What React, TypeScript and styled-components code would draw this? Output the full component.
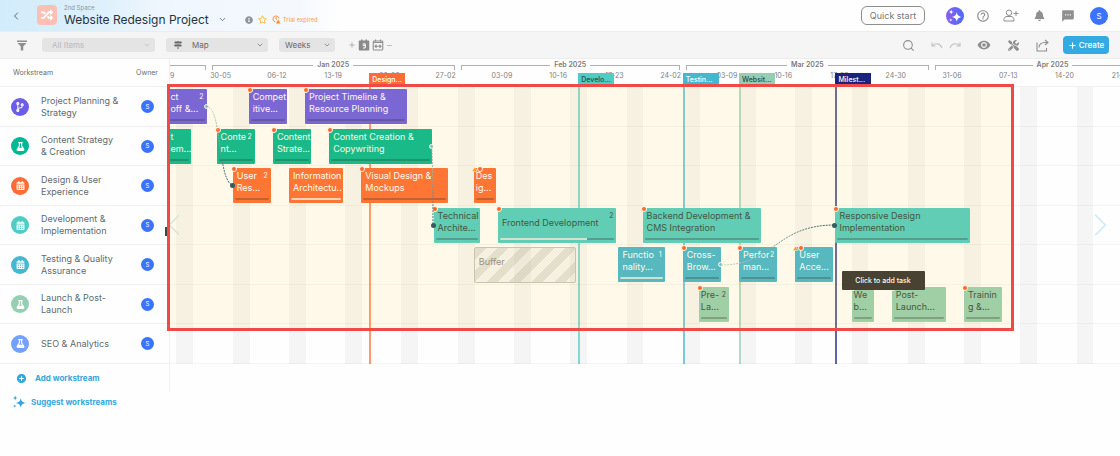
import React from 'react';
import styled, { createGlobalStyle, css } from 'styled-components';
import { FaRandom, FaInfoCircle, FaRegStar, FaMapSigns, FaTools, FaCodeBranch, FaFlask, FaCalendarAlt, FaBell } from 'react-icons/fa';
import { MdHelpOutline, MdTextsms, MdRemoveRedEye, MdAddCircle } from 'react-icons/md';
import { Search, ChevronDown, ChevronLeft, ChevronRight, Plus, Minus } from 'lucide-react';

const GlobalStyle = createGlobalStyle`
  *, *::before, *::after { box-sizing: border-box; }
  body { margin: 0; background: #fefefe; font-family: Inter, "Liberation Sans", sans-serif; color: #5b6670; }
  button, select { font-family: inherit; margin: 0; }
  h1, ul { margin: 0; padding: 0; font-weight: 400; list-style: none; }
  svg { display: block; flex: none; }
`;

/* ---------- timeline scale ---------- */
const VISIBLE_DAYS = 118.2;
const LEAD = -0.2;
const dayPct = (d: number) => `${((d + LEAD) / VISIBLE_DAYS) * 100}%`;
const spanPct = (n: number) => `${(n / VISIBLE_DAYS) * 100}%`;

const palette = {
  purple: '#6c5ce7',
  green: '#00b894',
  orange: '#ff6b35',
  teal: '#4ecdc4',
  blue: '#45b7d1',
  sage: '#96ceb4',
  sky: '#74a0ff',
};

/* ---------- header ---------- */
const TopBar = styled.header`
  display: flex;
  align-items: center;
  height: 31px;
  padding: 0 12px 0 8px;
  background: linear-gradient(90deg, #d2ecfb 0, #ddf0fb 100px, #eff6fd 160px, #f5f9fe 300px, #fefefe 340px);
`;

const PlainButton = styled.button<{ $w?: number; $tone?: string }>`
  display: flex;
  align-items: center;
  justify-content: center;
  flex: none;
  width: ${p => p.$w ?? 16}px;
  height: 18px;
  padding: 0;
  border: 0;
  background: none;
  color: ${p => p.$tone ?? '#8f8f8f'};
  cursor: pointer;
`;

const SpaceLogo = styled.div`
  display: grid;
  place-items: center;
  width: 20px;
  height: 20px;
  margin: 0 7px 2px 14px;
  border-radius: 4px;
  background: #fbc0b5;
  color: #fff;
`;

const TitleBlock = styled.div`
  display: flex;
  flex-direction: column;
`;

const SpaceName = styled.span`
  font-size: 6px;
  line-height: 6px;
  padding-top: 2px;
  color: #8b959b;
`;

const TitleRow = styled.div`
  display: flex;
  align-items: center;
  gap: 6px;
`;

const Title = styled.h1`
  font-size: 12px;
  line-height: 16px;
  color: #24343c;
  white-space: nowrap;
`;

const StatusIcons = styled.div`
  display: flex;
  align-items: center;
  gap: 5px;
  margin: 8px 0 0 14px;
  font-size: 6px;
  color: #ff9a4a;
  white-space: nowrap;
`;

const Trial = styled.span`
  display: flex;
  align-items: center;
  gap: 2px;
`;

const Spacer = styled.div`
  flex: 1;
`;

const HeaderActions = styled.nav`
  display: flex;
  align-items: center;
  gap: 10px;
`;

const Account = styled.div`
  padding-left: 2px;
`;

const QuickStart = styled.button`
  width: 64px;
  height: 19px;
  margin-right: 11px;
  padding: 0;
  border: 1px solid #8d8d8d;
  border-radius: 6px;
  background: #fff;
  font-size: 9px;
  color: #777;
  white-space: nowrap;
`;

const AiButton = styled.button`
  display: grid;
  place-items: center;
  width: 18px;
  height: 18px;
  padding: 0;
  border: 0;
  border-radius: 50%;
  background: linear-gradient(90deg, #8b5cf0, #4b6cf8);
  color: #fff;
`;

const Avatar = styled.span<{ $size: number }>`
  display: grid;
  place-items: center;
  flex: none;
  width: ${p => p.$size}px;
  height: ${p => p.$size}px;
  border-radius: 50%;
  background: #3b73ff;
  color: #fff;
  font-size: ${p => (p.$size > 15 ? 8 : 6)}px;
  line-height: 8px;
`;

/* ---------- toolbar ---------- */
const Toolbar = styled.div`
  display: flex;
  align-items: center;
  height: 28px;
  padding: 0 11px 0 14px;
  border-top: 1px solid #ececec;
  border-bottom: 1px solid #ececec;
  background: #f5f5f5;
`;

const Filters = styled.div`
  display: flex;
  gap: 11px;
  padding: 0 13px 0 12px;
`;

const SelectShell = styled.label<{ $w: number; $indent: number; $muted?: boolean }>`
  display: flex;
  align-items: center;
  gap: 10px;
  width: ${p => p.$w}px;
  height: 14px;
  padding: 0 4px 0 ${p => p.$indent}px;
  border-radius: 3px;
  background: #e4e4e4;
  color: ${p => (p.$muted ? '#b9b9b9' : '#686868')};

  select {
    flex: 1;
    min-width: 0;
    padding: 0;
    border: 0;
    appearance: none;
    background: transparent;
    color: inherit;
    font-size: 8px;
    line-height: 12px;
    opacity: 1;
  }
`;

const SelectArrow = styled(ChevronDown)`
  margin-left: -10px;
`;

const ZoomTools = styled.div`
  display: flex;
  align-items: center;
  gap: 2px;
  color: #9a9a9a;
`;

const ToolActions = styled.div`
  display: flex;
  align-items: center;
  gap: 13px;
`;

const UndoGroup = styled.div`
  display: flex;
  gap: 2px;
`;

const CreateButton = styled.button`
  display: flex;
  align-items: center;
  justify-content: center;
  gap: 2px;
  width: 46px;
  height: 18px;
  padding: 0;
  border: 0;
  border-radius: 4px;
  background: #33aae1;
  color: #fff;
  font-size: 8px;
  font-weight: 500;
`;

/* ---------- board ---------- */
const Board = styled.main`
  display: flex;
  align-items: flex-start;
`;

const Sidebar = styled.aside`
  flex: none;
  width: 170px;
  border-right: 1px solid #efefef;
`;

const SideHead = styled.div`
  display: flex;
  justify-content: space-between;
  align-items: center;
  height: 28px;
  padding: 0 11px 0 13px;
  border-bottom: 1px solid #f0f0f0;
  font-size: 7px;
  color: #6d6d6d;
`;

const rowHeight = css`
  height: 40px;
  &:nth-child(even) { height: 39px; }
`;

const StreamRow = styled.li`
  ${rowHeight}
  display: flex;
  align-items: center;
  padding: 0 15px 0 11px;
  border-bottom: 1px solid #efefef;
`;

const StreamIcon = styled.span<{ $tone: string }>`
  display: grid;
  place-items: center;
  width: 18px;
  height: 18px;
  margin-right: 12px;
  border-radius: 50%;
  background: ${p => p.$tone};
  color: #fff;
`;

const StreamName = styled.span`
  flex: 1;
  padding-right: 20px;
  font-size: 9px;
  line-height: 12px;
  color: #5f6b6f;
`;

const SideAction = styled.button<{ $pad: number; $gap: number; $h: number }>`
  display: flex;
  align-items: center;
  gap: ${p => p.$gap}px;
  width: 100%;
  height: ${p => p.$h}px;
  padding: 0 0 0 ${p => p.$pad}px;
  border: 0;
  background: none;
  color: #36a7dc;
  font-size: 8px;
  font-weight: 700;
  white-space: nowrap;
`;

const Footer = styled.div`
  width: 170px;
`;

const Timeline = styled.section`
  position: relative;
  flex: 1;
  min-width: 0;
`;

const Clip = styled.div`
  position: relative;
  overflow: hidden;
`;

const ScaleHead = styled.div`
  position: relative;
  display: grid;
  grid-template-rows: 12px 16px;
  height: 28px;
  border-bottom: 1px solid #f0f0f0;
`;

const Months = styled.div`
  display: grid;
`;

const Month = styled.div`
  grid-area: 1 / 1;
  display: flex;
  align-items: center;
  padding: 0 3px;
  font-size: 7px;
  line-height: 10px;
  font-weight: 600;
  color: #7b7b7b;
  white-space: nowrap;
`;

const Bracket = styled.i<{ $side: 'left' | 'right' }>`
  flex: 1;
  height: 5px;
  margin-top: 4px;
  border-top: 1px solid #b0b0b0;
  border-${p => p.$side}: 1px solid #b0b0b0;
  margin-${p => (p.$side === 'left' ? 'right' : 'left')}: 4px;
`;

const Weeks = styled.div`
  display: grid;
`;

const Week = styled.span`
  grid-area: 1 / 1;
  text-align: center;
  font-size: 7px;
  line-height: 10px;
  color: #808080;
  white-space: nowrap;
`;

const Lanes = styled.div`
  position: relative;
`;

const Backdrop = styled.div`
  position: absolute;
  inset: 0;
  display: grid;
`;

const Weekend = styled.i`
  grid-area: 1 / 1;
  background: #f5f5f5;
`;

const MarkerLine = styled.i<{ $tone: string }>`
  grid-area: 1 / 1;
  width: 2px;
  background: ${p => p.$tone};
  opacity: 0.7;
`;

const LaneList = styled.div`
  position: relative;
`;

const Lane = styled.div`
  ${rowHeight}
  position: relative;
  display: grid;
  align-items: start;
  padding-top: 2px;
  border-bottom: 1px solid rgba(0, 0, 0, 0.04);
`;

const Task = styled.div<{ $tone: string; $dark?: boolean; $narrow?: boolean; $single?: boolean }>`
  grid-area: 1 / 1;
  position: relative;
  display: flex;
  align-items: ${p => (p.$single ? 'center' : 'flex-start')};
  height: 35px;
  padding: ${p => (p.$single ? '0 1px 6px 4px' : '2px 1px 0 4px')};
  ${p => p.$narrow && 'padding-left: 2px;'}
  border-radius: 1px;
  background: ${p => p.$tone};
  color: ${p => (p.$dark ? '#334b43' : '#fff')};
  font-size: 9px;
  line-height: 12px;
`;

const TaskLabel = styled.span`
  flex: 1;
  min-width: 0;
  white-space: pre;
`;

const TaskCount = styled.span`
  position: absolute;
  top: 3px;
  right: 3px;
  font-size: 7px;
  line-height: 9px;
`;

const Progress = styled.i`
  position: absolute;
  left: 2px;
  right: 2px;
  bottom: 3px;
  height: 2px;
  border-radius: 1px;
  background: rgba(30, 40, 40, 0.3);
  overflow: hidden;

  &::after {
    content: '';
    display: block;
    width: var(--done);
    height: 100%;
    background: rgba(255, 255, 255, 0.75);
  }
`;

const Flags = styled.span`
  position: absolute;
  top: -2px;
  left: -2px;
  display: flex;
`;

const FlagDot = styled.i`
  width: 6px;
  height: 6px;
  border: 1px solid #fff;
  border-radius: 50%;
  background: #ff5a2c;
`;

const Pin = styled.i<{ $kind: 'out' | 'in' }>`
  position: absolute;
  top: 15px;
  ${p => (p.$kind === 'out' ? 'right: -2px;' : 'left: -3px;')}
  width: 5px;
  height: 5px;
  border-radius: 50%;
  border: ${p => (p.$kind === 'out' ? '1px solid #fff' : '0')};
  background: ${p => (p.$kind === 'out' ? '#6fc0d8' : '#1d5068')};
`;

const Buffer = styled.div`
  grid-area: 1 / 1;
  display: flex;
  align-items: center;
  height: 36px;
  padding: 0 4px 6px;
  border: 1px solid #c4c3bd;
  border-radius: 2px;
  background: repeating-linear-gradient(135deg, rgba(150, 150, 140, 0.28) 0 8px, rgba(190, 190, 190, 0.15) 8px 16px);
  font-size: 9px;
  line-height: 12px;
  color: #8d8a8c;
`;

const TagLayer = styled.div`
  position: absolute;
  inset: 14px 0 0;
  display: grid;
  align-items: start;
`;

const MarkerTag = styled.span<{ $tone: string; $dark?: boolean }>`
  grid-area: 1 / 1;
  width: 36px;
  height: 12px;
  padding-left: 3px;
  background: ${p => p.$tone};
  color: ${p => (p.$dark ? '#33474a' : '#fff')};
  font-size: 7px;
  font-weight: 500;
  line-height: 13px;
`;

const Links = styled.svg`
  position: absolute;
  inset: 0;
  width: 100%;
  height: 100%;
  pointer-events: none;
`;

const Tooltip = styled.div`
  position: absolute;
  top: 212px;
  width: 83px;
  height: 19px;
  border-radius: 1px;
  background: #333333;
  color: #fff;
  font-size: 7px;
  font-weight: 500;
  line-height: 19px;
  text-align: center;
`;

const Highlight = styled.div`
  position: absolute;
  top: 25px;
  left: -3px;
  bottom: 33px;
  width: calc(89% + 1px);
  border: 3px solid #f04a48;
  background: rgba(255, 205, 35, 0.1);
  pointer-events: none;
`;

const PageArrow = styled.button<{ $side: 'left' | 'right' }>`
  position: absolute;
  top: 153px;
  ${p => p.$side}: ${p => (p.$side === 'left' ? '-4px' : '13px')};
  padding: 0;
  border: 0;
  background: none;
  color: ${p => (p.$side === 'left' ? '#d6e9ee' : '#cdeafa')};
`;

const ResizeGrip = styled.i`
  position: absolute;
  top: 168px;
  left: -5px;
  width: 2px;
  height: 9px;
  background: #444;
`;

/* ---------- drawings ---------- */
const Sparkles = ({ size = 12 }: { size?: number }) => (
  <svg width={size} height={size} viewBox="0 0 24 24" fill="currentColor">
    <path d="M15 5c1 5.500 2.500 7 8.500 8.500C17.500 15 16 16.500 15 22c-1-5.500-2.500-7-8.500-8.500C12.500 12 14 10.500 15 5z" />
    <path d="M5.500 1c.5 2.800 1.300 3.600 4.200 4.300C6.800 6 6 6.800 5.500 9.600 5 6.800 4.200 6 1.300 5.300 4.200 4.600 5 3.800 5.500 1z" />
    <path d="M4.800 16c.4 2 1 2.600 3 3-2 .4-2.600 1-3 3-.4-2-1-2.600-3-3 2-.4 2.600-1 3-3z" />
  </svg>
);

const Funnel = () => (
  <svg width="12" height="11" viewBox="0 0 24 22" fill="#8f8f8f">
    <path d="M2 1h20v3H2zM3 6h18l-6.500 7v8h-5v-8z" />
  </svg>
);

const PersonAdd = () => (
  <svg width="16" height="13" viewBox="0 0 32 26" fill="none" stroke="currentColor" strokeWidth="2">
    <circle cx="12" cy="7.500" r="5.500" />
    <path d="M2 24v-3c0-4 3-6 6-6h8c3 0 6 2 6 6v3zM21 9h10M26 4v10" />
  </svg>
);

const ShareIcon = () => (
  <svg width="13" height="13" viewBox="0 0 26 26" fill="none" stroke="currentColor" strokeWidth="2.200">
    <path d="M2 7v17h19v-6M6 17c0-6 4-10 12-10h5M18 2l6 5-6 5" />
  </svg>
);

const UndoIcon = ({ flip = false }: { flip?: boolean }) => (
  <svg width="12" height="8" viewBox="0 0 24 16" fill="none" stroke="#c4c4c4" strokeWidth="2.400">
    <g transform={flip ? 'matrix(-1 0 0 1 24 0)' : undefined}>
      <path d="M2 3v7h7M2.500 9.500C6 5 18 2 22 14" />
    </g>
  </svg>
);

const ClockWarning = () => (
  <svg width="9" height="9" viewBox="0 0 18 18" fill="none" stroke="#ff8a2c" strokeWidth="1.800">
    <path d="M7 13.800A6 6 0 1 1 13.800 7M8 4v4l2 1.500" />
    <path d="M12.500 9l4.700 8H7.800z" fill="#ff8a2c" stroke="none" />
  </svg>
);

const CalendarDay = () => (
  <svg width="12" height="12" viewBox="0 0 24 24">
    <path d="M3 3h3V1h3v2h6V1h3v2h3a1.500 1.500 0 0 1 1.500 1.500v17A1.500 1.500 0 0 1 21 23H3a1.500 1.500 0 0 1-1.500-1.500v-17A1.500 1.500 0 0 1 3 3z" fill="#8a8a8a" />
    <path d="M14.500 14V9.500h-4v3.700h4M14.500 12v6H10" fill="none" stroke="#fff" strokeWidth="2" />
  </svg>
);

const CalendarRange = () => (
  <svg width="12" height="12" viewBox="0 0 24 24" fill="none" stroke="#8f8f8f" strokeWidth="2.200">
    <rect x="2.500" y="4" width="19" height="18" rx="1.500" />
    <path d="M2.500 7h19M7 1v4M17 1v4M6 14.500h12M9 11.500l-3 3 3 3M15 11.500l3 3-3 3" />
  </svg>
);

const WarningTriangle = () => (
  <svg width="5" height="6" viewBox="0 0 10 12">
    <path d="M5 2l5 9H0z" fill="#ff9226" stroke="#fff" />
  </svg>
);

/* ---------- data ---------- */
type TaskData = {
  from: number;
  to: number;
  label: string;
  count?: number;
  flag?: boolean;
  warn?: boolean;
  done?: number;
  single?: boolean;
  narrow?: boolean;
  pinOut?: boolean;
  pinIn?: boolean;
};

type Stream = { name: string; tone: string; icon: React.ReactNode; dark?: boolean; tasks: TaskData[]; buffer?: [number, number] };

const streams: Stream[] = [
  {
    name: 'Project Planning & Strategy', tone: palette.purple, icon: <FaCodeBranch size={10} />,
    tasks: [
      { from: 0, to: 5, label: 'ct\noff &...', count: 2, narrow: true, pinOut: true },
      { from: 10, to: 15, label: 'Compet\nitive...', flag: true },
      { from: 17, to: 30, label: 'Project Timeline &\nResource Planning', flag: true },
    ],
  },
  {
    name: 'Content Strategy & Creation', tone: palette.green, icon: <FaFlask size={9} />,
    tasks: [
      { from: 0, to: 3, label: 't\nem...', narrow: true },
      { from: 6, to: 11, label: 'Conte\nnt...', count: 2, flag: true },
      { from: 13, to: 18, label: 'Content\nStrate...', flag: true },
      { from: 20, to: 33, label: 'Content Creation &\nCopywriting', flag: true, pinOut: true },
    ],
  },
  {
    name: 'Design & User Experience', tone: palette.orange, icon: <FaCalendarAlt size={9} />,
    tasks: [
      { from: 8, to: 13, label: 'User\nRes...', count: 2, flag: true, pinIn: true },
      { from: 15, to: 22, label: 'Information\nArchitectu..', done: 100 },
      { from: 24, to: 35, label: 'Visual Design &\nMockups', flag: true },
      { from: 38, to: 41, label: 'Des\nig...', flag: true, warn: true, narrow: true },
    ],
  },
  {
    name: 'Development & Implementation', tone: palette.teal, icon: <FaCalendarAlt size={9} />, dark: true,
    tasks: [
      { from: 33, to: 39, label: 'Technical\nArchite...', flag: true, pinIn: true },
      { from: 41, to: 56, label: 'Frontend Development', count: 2, flag: true, done: 76, single: true },
      { from: 59, to: 74, label: 'Backend Development &\nCMS Integration', flag: true },
      { from: 83, to: 100, label: 'Responsive Design\nImplementation', flag: true, pinIn: true },
    ],
  },
  {
    name: 'Testing & Quality Assurance', tone: palette.blue, icon: <FaCalendarAlt size={9} />, buffer: [38, 51],
    tasks: [
      { from: 56, to: 62, label: 'Functio\nnality...', count: 1, done: 100 },
      { from: 64, to: 69, label: 'Cross-\nBrow...', flag: true, pinOut: true },
      { from: 71, to: 76, label: 'Perfor\nman...', count: 2, flag: true },
      { from: 78, to: 83, label: 'User\nAcce...', flag: true, warn: true },
    ],
  },
  {
    name: 'Launch & Post-Launch', tone: palette.sage, icon: <FaFlask size={9} />, dark: true,
    tasks: [
      { from: 66, to: 70, label: 'Pre-\nLa...', count: 2, flag: true, narrow: true },
      { from: 85, to: 88, label: 'We\nb...', flag: true, narrow: true },
      { from: 90, to: 97, label: 'Post-\nLaunch...', flag: true },
      { from: 99, to: 104, label: 'Trainin\ng &...', flag: true },
    ],
  },
  { name: 'SEO & Analytics', tone: palette.sky, icon: <FaFlask size={9} />, tasks: [] },
];

const months = [
  { name: '', from: -26, days: 31 },
  { name: 'Jan 2025', from: 5, days: 31 },
  { name: 'Feb 2025', from: 36, days: 28 },
  { name: 'Mar 2025', from: 64, days: 31 },
  { name: 'Apr 2025', from: 95, days: 30 },
];

const weeks = ['30-05', '06-12', '13-19', '20-26', '27-02', '03-09', '10-16', '17-23', '24-02', '03-09', '10-16', '17-23', '24-30', '31-06', '07-13', '14-20', '21-27'];

const markers = [
  { day: 25, label: 'Design...', tone: palette.orange },
  { day: 51, label: 'Develo...', tone: palette.teal, dark: true },
  { day: 64, label: 'Testin...', tone: palette.blue },
  { day: 71, label: 'Websit...', tone: palette.sage, dark: true },
  { day: 83, label: 'Milest...', tone: '#1a237e' },
];

const place = (from: number, to: number): React.CSSProperties => ({
  marginLeft: dayPct(from),
  width: `calc(${spanPct(to - from)} - 2px)`,
});

const TaskBar = ({ task, stream }: { task: TaskData; stream: Stream }) => (
  <Task $tone={stream.tone} $dark={stream.dark} $narrow={task.narrow} $single={task.single} style={place(task.from, task.to)}>
    <TaskLabel>{task.label}</TaskLabel>
    {task.count && <TaskCount>{task.count}</TaskCount>}
    <Progress style={{ '--done': `${task.done ?? 0}%` } as React.CSSProperties} />
    {task.flag && <Flags>{task.warn && <WarningTriangle />}<FlagDot /></Flags>}
    {task.pinOut && <Pin $kind="out" />}
    {task.pinIn && <Pin $kind="in" />}
  </Task>
);

export default function App() {
  return (
    <>
      <GlobalStyle />
      <TopBar>
        <PlainButton aria-label="Back" $w={15} $tone="#55666f"><ChevronLeft size={12} /></PlainButton>
        <SpaceLogo><FaRandom size={12} /></SpaceLogo>
        <TitleBlock>
          <SpaceName>2nd Space</SpaceName>
          <TitleRow>
            <Title>Website Redesign Project</Title>
            <PlainButton aria-label="Project menu" $tone="#44545c"><ChevronDown size={9} /></PlainButton>
          </TitleRow>
        </TitleBlock>
        <StatusIcons>
          <FaInfoCircle size={8} color="#8e9499" />
          <FaRegStar size={9} color="#fdb634" />
          <Trial><ClockWarning />Trial expired</Trial>
        </StatusIcons>
        <Spacer />
        <HeaderActions>
          <QuickStart>Quick start</QuickStart>
          <AiButton aria-label="AI assistant"><Sparkles size={14} /></AiButton>
          <PlainButton aria-label="Help" $w={18}><MdHelpOutline size={14} /></PlainButton>
          <PlainButton aria-label="Invite" $w={18}><PersonAdd /></PlainButton>
          <PlainButton aria-label="Notifications" $w={18}><FaBell size={11} /></PlainButton>
          <PlainButton aria-label="Messages" $w={20}><MdTextsms size={14} /></PlainButton>
          <Account><Avatar $size={18}>S</Avatar></Account>
        </HeaderActions>
      </TopBar>

      <Toolbar>
        <PlainButton aria-label="Filter"><Funnel /></PlainButton>
        <Filters>
          <SelectShell $w={113} $indent={10} $muted>
            <select aria-label="Items" disabled><option>All Items</option></select>
            <SelectArrow size={8} />
          </SelectShell>
          <SelectShell $w={102} $indent={8}>
            <FaMapSigns size={8} />
            <select aria-label="View"><option>Map</option></select>
            <SelectArrow size={8} />
          </SelectShell>
          <SelectShell $w={56} $indent={6}>
            <select aria-label="Scale"><option>Weeks</option></select>
            <SelectArrow size={8} />
          </SelectShell>
        </Filters>
        <ZoomTools>
          <Plus size={8} /><CalendarDay /><CalendarRange /><Minus size={7} />
        </ZoomTools>
        <Spacer />
        <ToolActions>
          <PlainButton aria-label="Search"><Search size={13} strokeWidth={2} /></PlainButton>
          <UndoGroup>
            <PlainButton aria-label="Undo"><UndoIcon /></PlainButton>
            <PlainButton aria-label="Redo"><UndoIcon flip /></PlainButton>
          </UndoGroup>
          <PlainButton aria-label="Preview"><MdRemoveRedEye size={14} /></PlainButton>
          <PlainButton aria-label="Settings"><FaTools size={11} /></PlainButton>
          <PlainButton aria-label="Share"><ShareIcon /></PlainButton>
          <CreateButton><Plus size={9} strokeWidth={3} />Create</CreateButton>
        </ToolActions>
      </Toolbar>

      <Board>
        <Sidebar>
          <SideHead><span>Workstream</span><span>Owner</span></SideHead>
          <ul>
            {streams.map(s => (
              <StreamRow key={s.name}>
                <StreamIcon $tone={s.tone}>{s.icon}</StreamIcon>
                <StreamName>{s.name}</StreamName>
                <Avatar $size={13}>S</Avatar>
              </StreamRow>
            ))}
          </ul>
          <SideAction $pad={16} $gap={8} $h={28}><MdAddCircle size={11} />Add workstream</SideAction>
        </Sidebar>

        <Timeline>
          <Clip>
            <ScaleHead>
              <Months>
                {months.map(m => (
                  <Month key={m.from} style={{ marginLeft: dayPct(m.from), width: spanPct(m.days) }}>
                    <Bracket $side="left" />{m.name}<Bracket $side="right" />
                  </Month>
                ))}
              </Months>
              <Weeks>
                <Week style={{ marginLeft: 0, width: spanPct(0.5) }}>9</Week>
                {weeks.map((w, i) => (
                  <Week key={i} style={{ marginLeft: dayPct(i * 7 + 3), width: spanPct(7) }}>{w}</Week>
                ))}
              </Weeks>
              <TagLayer>
                {markers.map(m => (
                  <MarkerTag key={m.day} $tone={m.tone} $dark={m.dark} style={{ marginLeft: dayPct(m.day) }}>{m.label}</MarkerTag>
                ))}
              </TagLayer>
            </ScaleHead>
            <Lanes>
              <Backdrop>
                {[0, ...weeks].map((_, i) => (
                  <Weekend key={i} style={{ marginLeft: dayPct(i * 7 + 1), width: spanPct(2.1) }} />
                ))}
                {markers.map(m => (
                  <MarkerLine key={m.day} $tone={m.tone} style={{ marginLeft: dayPct(m.day) }} />
                ))}
              </Backdrop>
              <LaneList>
                {streams.map(s => (
                  <Lane key={s.name}>
                    {s.buffer && <Buffer style={place(s.buffer[0], s.buffer[1])}>Buffer</Buffer>}
                    {s.tasks.map(t => <TaskBar key={t.from} task={t} stream={s} />)}
                  </Lane>
                ))}
              </LaneList>
              <Links viewBox="0 0 950 277" preserveAspectRatio="none" fill="none" strokeDasharray="2 1">
                <defs>
                  <linearGradient id="fadeDown" gradientUnits="userSpaceOnUse" x1="0" y1="19" x2="0" y2="98">
                    <stop offset="0" stopColor="#c9d8d8" /><stop offset="1" stopColor="#1d5068" />
                  </linearGradient>
                  <linearGradient id="fadeDown2" gradientUnits="userSpaceOnUse" x1="0" y1="60" x2="0" y2="138">
                    <stop offset="0" stopColor="#c9d8d8" /><stop offset="1" stopColor="#1d5068" />
                  </linearGradient>
                  <linearGradient id="fadeAcross" gradientUnits="userSpaceOnUse" x1="551" y1="0" x2="665" y2="0">
                    <stop offset="0" stopColor="#c9d8d8" /><stop offset="1" stopColor="#1d5068" />
                  </linearGradient>
                </defs>
                <path d="M38 20C52 24 48 96 63 98" stroke="url(#fadeDown)" />
                <path d="M262 60C263 80 263 120 263 138" stroke="url(#fadeDown2)" />
                <path d="M551 178C605 178 605 138 665 138" stroke="url(#fadeAcross)" />
              </Links>
            </Lanes>
          </Clip>
          <PageArrow $side="left" aria-label="Earlier"><ChevronLeft size={26} strokeWidth={1} viewBox="7 4 8 16" width={13} /></PageArrow>
          <PageArrow $side="right" aria-label="Later"><ChevronRight size={26} strokeWidth={1} viewBox="8 4 8 16" width={13} /></PageArrow>
          <ResizeGrip />
          <Tooltip role="tooltip" style={{ left: `calc(${dayPct(84)} - 2px)` }}>Click to add task</Tooltip>
          <Highlight />
        </Timeline>
      </Board>
      <Footer>
        <SideAction $pad={12} $gap={5} $h={20}><Sparkles size={14} />Suggest workstreams</SideAction>
      </Footer>
    </>
  );
}
